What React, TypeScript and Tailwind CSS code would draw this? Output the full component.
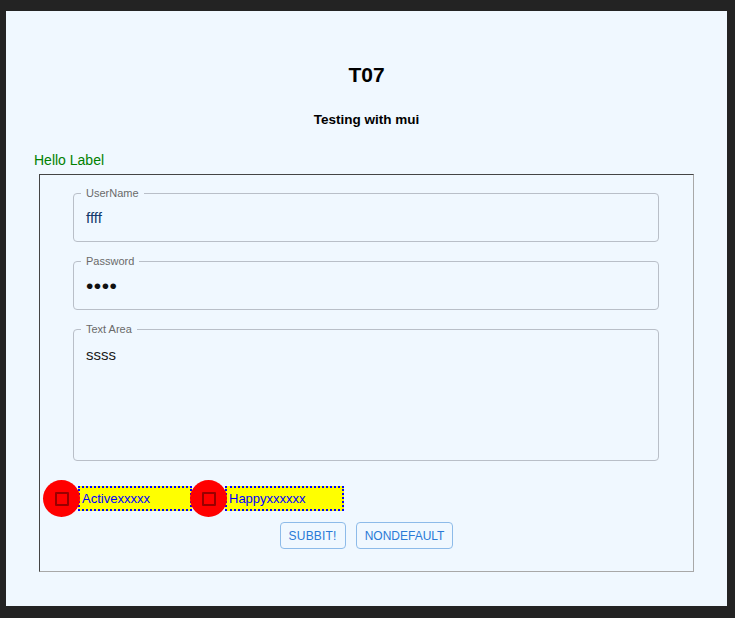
import React from 'react'

const font = { fontFamily: '"Liberation Sans", Arial, sans-serif' }

function OutlinedField({
  label,
  height,
  top,
  children,
}: {
  label: string
  height: string
  top?: boolean
  children: React.ReactNode
}) {
  return (
    <div
      className={`relative ml-[33px] w-[586px] ${height} border border-[#b9bfc8] rounded-[4px] pl-[12px] flex ${
        top ? 'items-start pt-[16px]' : 'items-center'
      }`}
    >
      <span className="absolute left-[7px] top-[-7px] px-[5px] bg-[#f0f8ff] text-[11px] leading-[13px] text-[#6a6a6a]">
        {label}
      </span>
      {children}
    </div>
  )
}

function CheckItem({ label, width, first }: { label: string; width: string; first?: boolean }) {
  return (
    <div className={`flex items-center ${first ? '' : '-ml-[2px]'}`}>
      <div className="relative z-10 w-[37px] h-[37px] rounded-full bg-[#ff0000] flex items-center justify-center">
        <div className="w-[14px] h-[14px] border-2 border-[#990000] bg-[#ff0000] rounded-[1px]" />
      </div>
      <div
        className={`-ml-[2px] ${width} h-[25px] border-2 border-dotted border-[#0000ff] bg-[#ffff00] pl-[2px] text-[13px] leading-[21px] text-[#0000ff]`}
      >
        {label}
      </div>
    </div>
  )
}

export default function App() {
  return (
    <div className="h-[618px] bg-[#232323] pt-[11px] pl-[6px]" style={font}>
      <div className="w-[721px] h-[595px] bg-[#f0f8ff] flex flex-col">
        {/* Header */}
        <h1 className="mt-[53px] h-[22px] leading-[22px] text-center text-[21px] font-bold text-black">T07</h1>
        <h2 className="mt-[26px] h-[16px] leading-[16px] text-center text-[13.5px] font-bold text-black">
          Testing with mui
        </h2>
        <div className="mt-[23px] ml-[28px] h-[18px] leading-[18px] text-[14px] text-[#008000]">Hello Label</div>

        {/* Form box */}
        <div className="mt-[5px] ml-[33px] w-[655px] h-[398px] border border-t-[#454545] border-l-[#454545] border-r-[#a8a8a8] border-b-[#a8a8a8] pt-[18px]">
          <OutlinedField label="UserName" height="h-[49px]">
            <span className="text-[15px] leading-[17px] text-[#123a6c]">ffff</span>
          </OutlinedField>
          <div className="h-[19px]" />
          <OutlinedField label="Password" height="h-[49px]">
            <span className="text-[21px] leading-[17px] tracking-[0.5px] text-[#111]">••••</span>
          </OutlinedField>
          <div className="h-[19px]" />
          <OutlinedField label="Text Area" height="h-[132px]" top>
            <span className="text-[15px] leading-[17px] text-[#1a1a1a]">ssss</span>
          </OutlinedField>

          {/* Checkboxes */}
          <div className="mt-[19px] ml-[3px] h-[37px] flex items-center">
            <CheckItem label="Activexxxxx" width="w-[114px]" first />
            <CheckItem label="Happyxxxxxx" width="w-[119px]" />
          </div>

          {/* Buttons */}
          <div className="mt-[5px] flex justify-center gap-[10px]">
            <button className="h-[27px] px-[8px] border border-[#8dbbe9] rounded-[4px] text-[12px] tracking-[0.2px] text-[#2a7ad6] bg-transparent">
              SUBBIT!
            </button>
            <button className="h-[27px] px-[8px] border border-[#8dbbe9] rounded-[4px] text-[12px] text-[#2a7ad6] bg-transparent">
              NONDEFAULT
            </button>
          </div>
        </div>
      </div>
    </div>
  )
}
